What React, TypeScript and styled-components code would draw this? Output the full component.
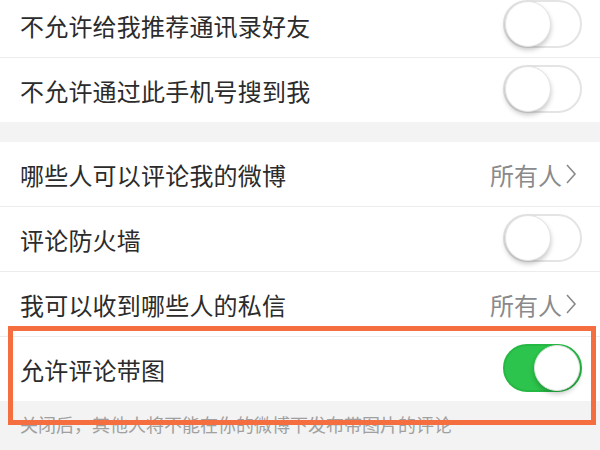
import React from "react";
import styled, { createGlobalStyle } from "styled-components";

const Global = createGlobalStyle`
  html, body { margin: 0; padding: 0; background: #f3f3f3; }
  body { font-family: "Noto Sans CJK SC", "Noto Sans", sans-serif; overflow: hidden; }
`;

const Page = styled.div`
  width: 600px;
  height: 450px;
  overflow: hidden;
  background: #f3f3f3;
`;

const List = styled.div`
  margin-top: -7px;
  display: flex;
  flex-direction: column;
`;

const Group = styled.div<{ $gap?: number }>`
  background: #fff;
  margin-top: ${(p) => p.$gap ?? 0}px;
  display: flex;
  flex-direction: column;
`;

const Row = styled.div<{ $last?: boolean }>`
  height: 64px;
  display: flex;
  align-items: center;
  justify-content: space-between;
  padding: 0 18px 0 20px;
  border-bottom: ${(p) => (p.$last ? "none" : "1px solid #ececec")};
  box-sizing: content-box;
`;

const Label = styled.span`
  font-size: 24px;
  color: #2b2b2b;
  letter-spacing: 0.2px;
`;

const Value = styled.span`
  display: flex;
  align-items: center;
  gap: 3px;
  font-size: 24px;
  color: #8a8a8a;
  margin-right: 5px;
`;

const Track = styled.div<{ $on?: boolean }>`
  width: 79px;
  height: 48px;
  border-radius: 24px;
  box-sizing: border-box;
  border: 2px solid ${(p) => (p.$on ? "#25b844" : "#e4e4e4")};
  background: ${(p) => (p.$on ? "#2cc44c" : "#fff")};
  display: flex;
  align-items: center;
  justify-content: ${(p) => (p.$on ? "flex-end" : "flex-start")};
  padding: 0;
  margin-top: -3px;
`;

const Knob = styled.div`
  width: 46px;
  height: 46px;
  border-radius: 50%;
  background: #fff;
  box-sizing: border-box;
  border: 1px solid #e2e2e2;
  box-shadow: 0 3px 5px rgba(0, 0, 0, 0.22);
`;

const Toggle = ({ on }: { on?: boolean }) => (
  <Track $on={on}>
    <Knob />
  </Track>
);

const Chevron = () => (
  <svg width="12" height="22" viewBox="0 0 12 22">
    <path d="M2 2 L10 11 L2 20" fill="none" stroke="#8a8a8a" strokeWidth="1.6" />
  </svg>
);

const Highlighted = styled.div`
  position: relative;
`;

const Frame = styled.div`
  position: absolute;
  left: 8px;
  right: 4px;
  top: -11px;
  height: 99px;
  border: 5px solid #f46e40;
  box-sizing: border-box;
  pointer-events: none;
  z-index: 2;
`;

const Footer = styled.div`
  background: #f3f3f3;
  padding: 11px 20px 0 20px;
  font-size: 18px;
  color: #a0a0a0;
  line-height: 24px;
`;

export default function App() {
  return (
    <Page>
      <Global />
      <List>
        <Group>
          <Row>
            <Label>不允许给我推荐通讯录好友</Label>
            <Toggle />
          </Row>
          <Row $last>
            <Label>不允许通过此手机号搜到我</Label>
            <Toggle />
          </Row>
        </Group>
        <Group $gap={20}>
          <Row>
            <Label>哪些人可以评论我的微博</Label>
            <Value>
              所有人
              <Chevron />
            </Value>
          </Row>
          <Row>
            <Label>评论防火墙</Label>
            <Toggle />
          </Row>
          <Row>
            <Label>我可以收到哪些人的私信</Label>
            <Value>
              所有人
              <Chevron />
            </Value>
          </Row>
        </Group>
        <Highlighted>
          <Frame />
          <Group>
            <Row $last>
              <Label>允许评论带图</Label>
              <Toggle on />
            </Row>
          </Group>
          <Footer>关闭后，其他人将不能在你的微博下发布带图片的评论</Footer>
        </Highlighted>
      </List>
    </Page>
  );
}
